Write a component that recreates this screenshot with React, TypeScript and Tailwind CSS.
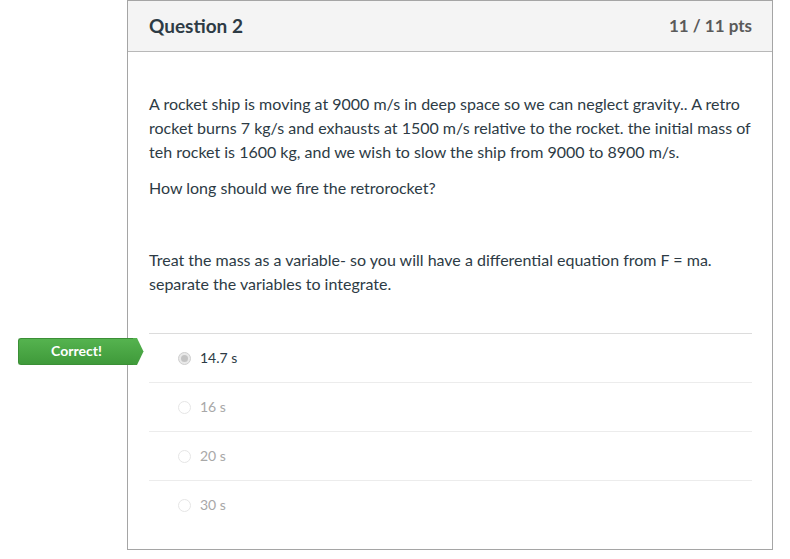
const answers = [
  { text: '14.7 s', selected: true },
  { text: '16 s', selected: false },
  { text: '20 s', selected: false },
  { text: '30 s', selected: false },
];

export default function App() {
  return (
    <div className="w-[790px] h-[559px] bg-white font-['Lato','Liberation_Sans',sans-serif] text-[#2d3b45]">
      <div className="ml-[127px] w-[646px] h-[550px] border border-[#a5a5a5] bg-white">
        {/* Header */}
        <div className="h-[51px] bg-[#f4f4f4] border-b border-[#b8b8b8] flex items-center justify-between pl-[21px] pr-[20px]">
          <h2 className="text-[19px] font-bold text-[#2d3b45]">Question 2</h2>
          <span className="text-[17px] font-bold text-[#5a5a5a]">11 / 11 pts</span>
        </div>

        {/* Body */}
        <div className="pl-[21px] pr-[20px] pt-[40px]">
          <div className="text-[16px] leading-[24px]">
            <p className="mb-3">
              A rocket ship is moving at 9000 m/s in deep space so we can neglect gravity.. A retro rocket burns 7 kg/s and
              exhausts at 1500 m/s relative to the rocket. the initial mass of teh rocket is 1600 kg, and we wish to slow the
              ship from 9000 to 8900 m/s.
            </p>
            <p className="mb-3">How long should we fire the retrorocket?</p>
            <p className="mb-3">&nbsp;</p>
            <p>
              Treat the mass as a variable- so you will have a differential equation from F = ma. separate the variables to
              integrate.
            </p>
          </div>

          {/* Answers */}
          <div className="mt-[37px]">
            {answers.map((a, i) => (
              <div
                key={i}
                className={`relative h-[49px] flex items-center pl-[29px] border-t ${i === 0 ? 'border-[#dcdcdc]' : 'border-[#ececec]'}`}
              >
                {a.selected ? (
                  <span className="w-[13px] h-[13px] rounded-full border border-[#cfcfcf] bg-[#e9e9e9] flex items-center justify-center">
                    <span className="w-[7px] h-[7px] rounded-full bg-[#c4c4c4]" />
                  </span>
                ) : (
                  <span className="w-[13px] h-[13px] rounded-full border border-[#e6e6e6] bg-white" />
                )}
                <span className={`ml-[9px] -mt-px text-[14px] ${a.selected ? 'text-[#2d3b45]' : 'text-[#a8a8a8]'}`}>{a.text}</span>

                {a.selected && (
                  <div className="absolute left-[-131px] top-[4px] flex items-center">
                    <div className="w-[116px] h-[27px] rounded-l-[3px] bg-gradient-to-b from-[#55b34f] to-[#3f9a3a] border border-[#3b8f36] border-r-0 flex items-center justify-center pb-[3px] text-white text-[14px] font-bold">
                      Correct!
                    </div>
                    <svg width="11" height="27" viewBox="0 0 11 27" className="-ml-px">
                      <defs>
                        <linearGradient id="g" x1="0" y1="0" x2="0" y2="1">
                          <stop offset="0" stopColor="#55b34f" />
                          <stop offset="1" stopColor="#3f9a3a" />
                        </linearGradient>
                      </defs>
                      <polygon points="0,0 4,0 10.5,13.5 4,27 0,27" fill="url(#g)" />
                    </svg>
                  </div>
                )}
              </div>
            ))}
          </div>
        </div>
      </div>
    </div>
  );
}
